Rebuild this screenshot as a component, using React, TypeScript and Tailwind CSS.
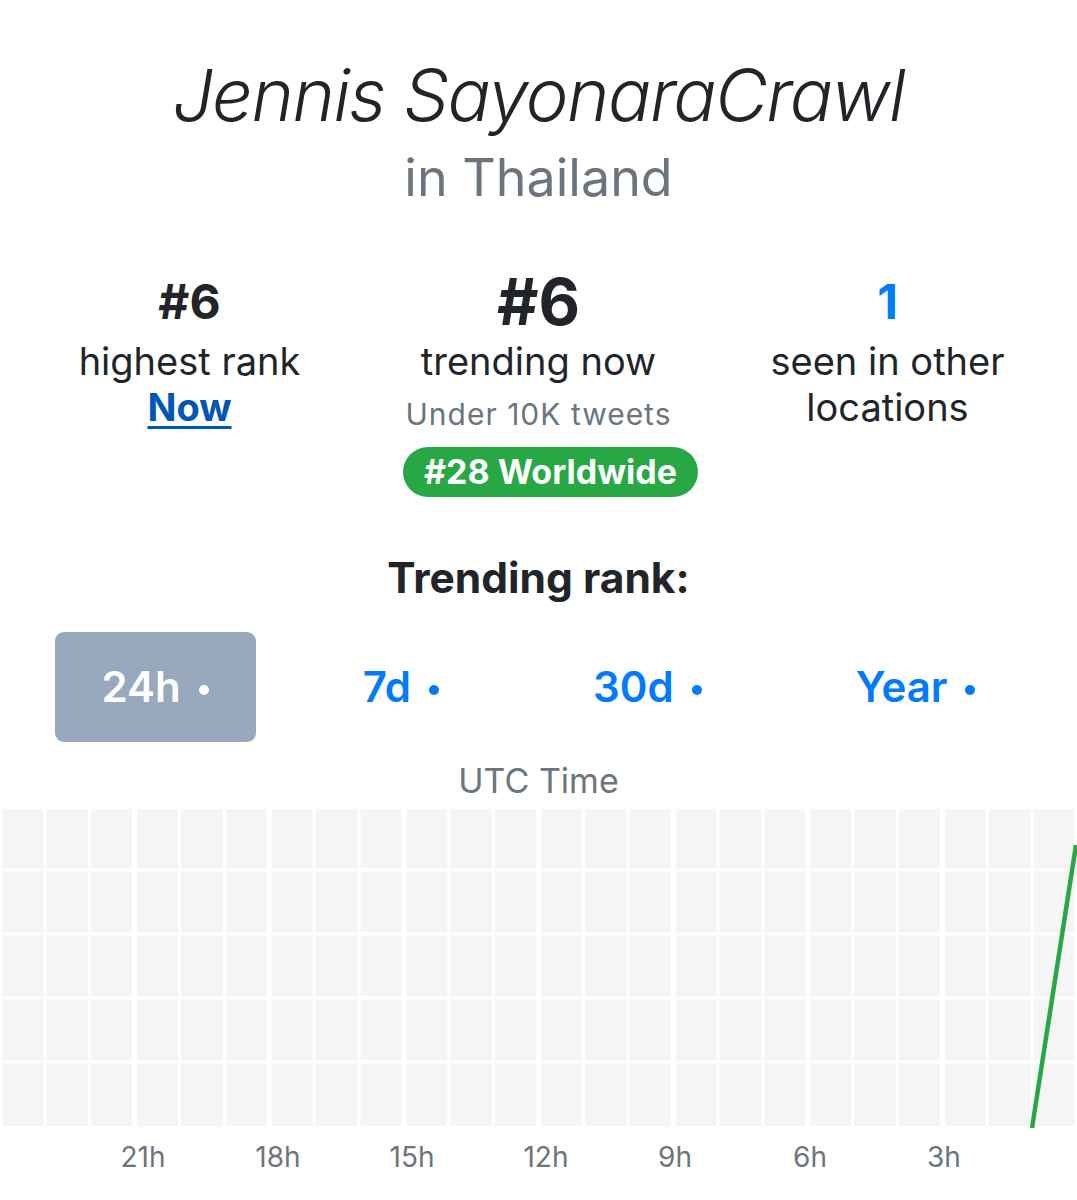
import React from "react";

const COLS = 24;
const CW = 1077 / COLS;

function Chart() {
  const vlines = Array.from({ length: COLS + 1 }, (_, k) => k);
  const hlines = [62, 126, 190, 254];
  return (
    <svg width="1077" height="322" viewBox="0 0 1077 322" className="block">
      <rect x="0" y="1" width="1077" height="317" fill="#f5f5f5" />
      {vlines.map((k) => (
        <line
          key={k}
          x1={k * CW}
          x2={k * CW}
          y1="0"
          y2="320"
          stroke="#ffffff"
          strokeWidth={k % 3 === 0 ? 5 : 3}
        />
      ))}
      {hlines.map((y) => (
        <line key={y} x1="0" x2="1077" y1={y} y2={y} stroke="#ffffff" strokeWidth="3" />
      ))}
      <line x1="0" x2="1077" y1="319.5" y2="319.5" stroke="#ffffff" strokeWidth="3" />
      <line x1="1032" y1="320" x2="1076" y2="37" stroke="#28a745" strokeWidth="4.5" />
    </svg>
  );
}

const labels: [string, number][] = [
  ["21h", 143],
  ["18h", 278],
  ["15h", 412],
  ["12h", 546],
  ["9h", 675],
  ["6h", 810],
  ["3h", 944],
];

function Tab({ label, active }: { label: string; active?: boolean }) {
  return (
    <div
      className={
        active
          ? "h-[110px] px-[47px] rounded-[9px] bg-[#98a9bd] text-white text-[42px] leading-[110px] font-semibold whitespace-nowrap"
          : "h-[110px] px-[47px] text-[#007bff] text-[42px] leading-[110px] font-semibold whitespace-nowrap"
      }
    >
      {label}
      <span className="inline-block ml-[18px] w-[10px] h-[10px] rounded-full bg-current align-middle" />
    </div>
  );
}

export default function App() {
  return (
    <div className="w-[1077px] h-[1200px] bg-white overflow-hidden font-[family-name:Inter,sans-serif] text-[#212529]">
      <div className="pt-[52px] text-center">
        <h1 className="text-[72px] leading-[1.2] font-light italic tracking-[-1.4px]">Jennis SayonaraCrawl</h1>
        <div className="mt-[9px] text-[52px] leading-[1.2] text-[#6c757d]">in Thailand</div>
      </div>

      <div className="mt-[55px] px-[15px] grid grid-cols-3 text-center">
        <div className="flex flex-col items-center">
          <div className="h-[73px] text-[48px] leading-[73px] font-bold">#6</div>
          <div className="text-[38px] leading-[46px]">highest rank</div>
          <a href="#" className="text-[38px] leading-[46px] font-bold text-[#0056b3] underline underline-offset-[5px] decoration-[3px]">Now</a>
        </div>
        <div className="flex flex-col items-center">
          <div className="h-[73px] text-[64px] leading-[73px] font-bold">#6</div>
          <div className="text-[38px] leading-[46px]">trending now</div>
          <div className="mt-[10px] text-[30px] leading-[40px] text-[#6c757d] tracking-[1px]">Under 10K tweets</div>
          <div className="mt-[13px] ml-[24px] h-[50px] px-[21px] rounded-full bg-[#28a745] text-white text-[34px] leading-[50px] font-bold">#28 Worldwide</div>
        </div>
        <div className="flex flex-col items-center">
          <div className="h-[73px] text-[48px] leading-[73px] font-bold text-[#007bff]">1</div>
          <div className="text-[38px] leading-[46px]">seen in other locations</div>
        </div>
      </div>

      <div className="mt-[55px] text-center text-[42.5px] leading-[1.2] font-bold">Trending rank:</div>

      <div className="mt-[29px] flex justify-center gap-[60px]">
        <Tab label="24h" active />
        <Tab label="7d" />
        <Tab label="30d" />
        <Tab label="Year" />
      </div>

      <div className="mt-[19px] text-center text-[34px] leading-[40px] text-[#6c757d]">UTC Time</div>

      <div className="mt-[7px]">
        <Chart />
        <div className="relative h-[60px]">
          {labels.map(([t, x]) => (
            <span
              key={t}
              className="absolute top-[9px] -translate-x-1/2 text-[28px] leading-[36px] text-[#6c757d]"
              style={{ left: x }}
            >
              {t}
            </span>
          ))}
        </div>
      </div>
    </div>
  );
}
